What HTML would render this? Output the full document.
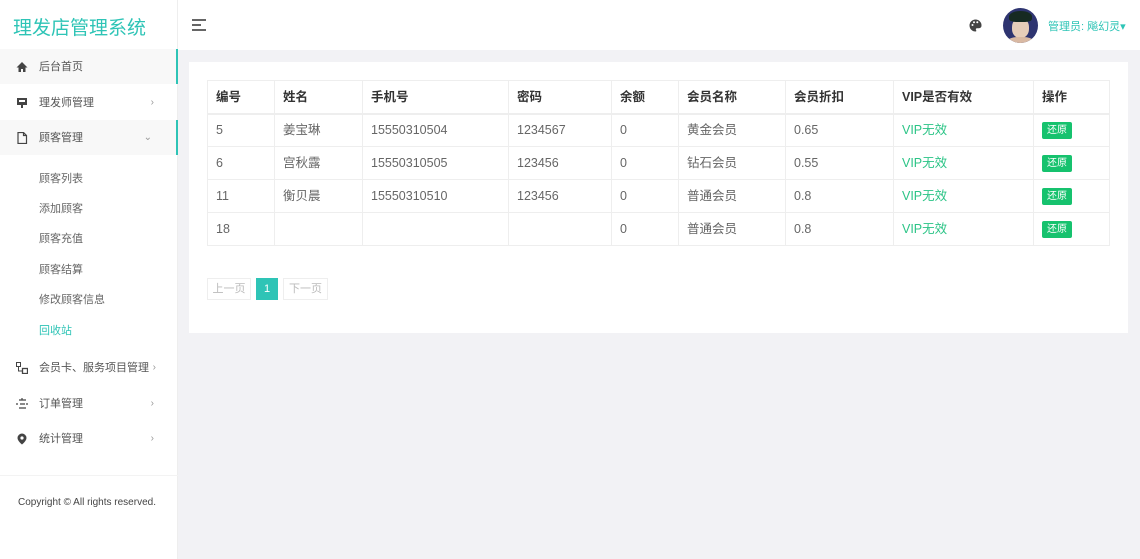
<!DOCTYPE html>
<html><head><meta charset="utf-8"><style>
*{margin:0;padding:0;box-sizing:border-box}
body{width:1140px;height:559px;background:#f2f2f5;font-family:"Liberation Sans","Noto Sans CJK SC",sans-serif;font-size:12px;color:#666;position:relative;overflow:hidden}
.side{position:absolute;left:0;top:0;width:178px;height:559px;background:#fff;border-right:1px solid #eee}
.logo{position:absolute;left:13px;top:13px;font-size:19px;color:#2ec4b6}
.item{position:absolute;left:0;width:178px;height:35px;line-height:36px;padding-left:39px;color:#555;white-space:nowrap;font-size:11px}
.item.act{background:#f8f8f8;border-right:2px solid #2ec4b6}
.item .ic{position:absolute;left:16px;top:12px;width:12px;height:12px}
.item .ar{position:absolute;right:24px;top:0;font-size:10px;color:#999}
.sub{position:absolute;left:39px;color:#666;font-size:11px}
.head{position:absolute;left:178px;top:0;right:0;height:50px;background:#fff}
.card{position:absolute;left:189px;top:62px;width:939px;height:271px;background:#fff}
table{position:absolute;left:18px;top:18px;border-collapse:collapse;width:903px}
td,th{border:1px solid #eee;height:33px;padding-left:8px;text-align:left;font-weight:normal;color:#666;font-size:12.5px;line-height:16px;vertical-align:middle}
th{font-weight:bold;color:#333;border-bottom:2px solid #eee}
.g{color:#2bc486}
.btn{display:inline-block;background:#16c26e;color:#fff;font-size:10px;padding:0 5px;height:17px;line-height:17px;border-radius:2px;vertical-align:middle}
.pg{position:absolute;top:216px;height:22px;line-height:20px;border:1px solid #eee;color:#bbb;text-align:center;font-size:11px}
</style></head><body>
<div class="side">
<div class="logo">理发店管理系统</div>
<div class="item act" style="top:49px"><svg class="ic" viewBox="0 0 12 12"><path d="M6 1L0.5 6.5H2.5V11H5V8H7V11H9.5V6.5H11.5Z" fill="#444"/></svg>后台首页</div>
<div class="item" style="top:85px"><svg class="ic" viewBox="0 0 12 12"><path d="M1 1H11V8H7V11H5V8H1Z" fill="#444"/><rect x="3" y="3" width="6" height="2" fill="#fff"/></svg>理发师管理<span class="ar">›</span></div>
<div class="item act" style="top:120px"><svg class="ic" viewBox="0 0 12 12"><path d="M2 0.5H7.5L10.5 3.5V11.5H2Z M7.5 0.5V3.5H10.5" fill="none" stroke="#444" stroke-width="1.2"/></svg>顾客管理<span class="ar">⌄</span></div>
<div class="sub" style="top:170px">顾客列表</div>
<div class="sub" style="top:200px">添加顾客</div>
<div class="sub" style="top:230px">顾客充值</div>
<div class="sub" style="top:261px">顾客结算</div>
<div class="sub" style="top:291px">修改顾客信息</div>
<div class="sub" style="top:322px;color:#2ec4b6">回收站</div>
<div class="item" style="top:350px"><svg class="ic" viewBox="0 0 12 12"><rect x="0.5" y="0.5" width="4" height="4" fill="none" stroke="#444"/><rect x="6.5" y="6.5" width="5" height="5" fill="none" stroke="#444" stroke-width="1.3"/><path d="M2.5 5V9H6" stroke="#444" fill="none"/></svg>会员卡、服务项目管理<span class="ar" style="right:22px">›</span></div>
<div class="item" style="top:386px"><svg class="ic" viewBox="0 0 12 12"><path d="M3 2H10M4 6H9M3 10H10M0 6H2M10 6H12M6 0V2" stroke="#444" stroke-width="1.2"/></svg>订单管理<span class="ar">›</span></div>
<div class="item" style="top:421px"><svg class="ic" viewBox="0 0 12 12"><path d="M6 0.5A4.5 4.5 0 0 0 1.5 5C1.5 8 6 11.5 6 11.5S10.5 8 10.5 5A4.5 4.5 0 0 0 6 0.5Z" fill="#444"/><circle cx="6" cy="5" r="1.6" fill="#fff"/></svg>统计管理<span class="ar">›</span></div>
<div style="position:absolute;left:0;top:475px;width:178px;border-top:1px solid #f3f3f3"></div>
<div style="position:absolute;left:18px;top:497px;font-size:10px;color:#444">Copyright © All rights reserved.</div>
</div>
<div class="head">
<svg style="position:absolute;left:14px;top:19px" width="14" height="12"><path d="M0 1H14M0 6H9M0 11H14" stroke="#333" stroke-width="1.5"/></svg>
<svg style="position:absolute;left:791px;top:19px" width="13" height="13" viewBox="0 0 13 13"><path d="M6.5 0.5A6 6 0 1 0 6.5 12.5C7.5 12.5 7.5 11.5 7 11 6.5 10.2 7 9.2 8 9.2H10A2.5 2.5 0 0 0 12.5 6.7 6 5.8 0 0 0 6.5 0.5Z" fill="#444"/><circle cx="3.5" cy="6" r="1" fill="#fff"/><circle cx="5" cy="3.3" r="1" fill="#fff"/><circle cx="8.3" cy="3.3" r="1" fill="#fff"/></svg>
<div style="position:absolute;left:825px;top:8px;width:35px;height:35px;border-radius:50%;overflow:hidden;background:#2e3470">
<div style="position:absolute;left:9px;top:10px;width:17px;height:20px;border-radius:45%;background:#e6cdb9"></div>
<div style="position:absolute;left:6px;top:3px;width:23px;height:11px;border-radius:50% 50% 30% 30%;background:#162a22"></div>
<div style="position:absolute;left:5px;top:29px;width:25px;height:10px;border-radius:40%;background:#d9b9a3"></div>
</div>
<div style="position:absolute;left:870px;top:18px;color:#2ec4b6;font-size:11px">管理员: 飚幻灵▾</div>
</div>
<div class="card">
<table>
<tr><th style="width:67px">编号</th><th style="width:88px">姓名</th><th style="width:146px">手机号</th><th style="width:103px">密码</th><th style="width:67px">余额</th><th style="width:107px">会员名称</th><th style="width:108px">会员折扣</th><th style="width:140px">VIP是否有效</th><th>操作</th></tr>
<tr><td>5</td><td>姜宝琳</td><td>15550310504</td><td>1234567</td><td>0</td><td>黄金会员</td><td>0.65</td><td class="g">VIP无效</td><td><span class="btn">还原</span></td></tr>
<tr><td>6</td><td>宫秋露</td><td>15550310505</td><td>123456</td><td>0</td><td>钻石会员</td><td>0.55</td><td class="g">VIP无效</td><td><span class="btn">还原</span></td></tr>
<tr><td>11</td><td>衡贝晨</td><td>15550310510</td><td>123456</td><td>0</td><td>普通会员</td><td>0.8</td><td class="g">VIP无效</td><td><span class="btn">还原</span></td></tr>
<tr><td>18</td><td></td><td></td><td></td><td>0</td><td>普通会员</td><td>0.8</td><td class="g">VIP无效</td><td><span class="btn">还原</span></td></tr>
</table>
<div class="pg" style="left:18px;width:44px">上一页</div>
<div class="pg" style="left:67px;width:22px;background:#2ec4b6;border-color:#2ec4b6;color:#fff">1</div>
<div class="pg" style="left:94px;width:45px">下一页</div>
</div>
</body></html>
